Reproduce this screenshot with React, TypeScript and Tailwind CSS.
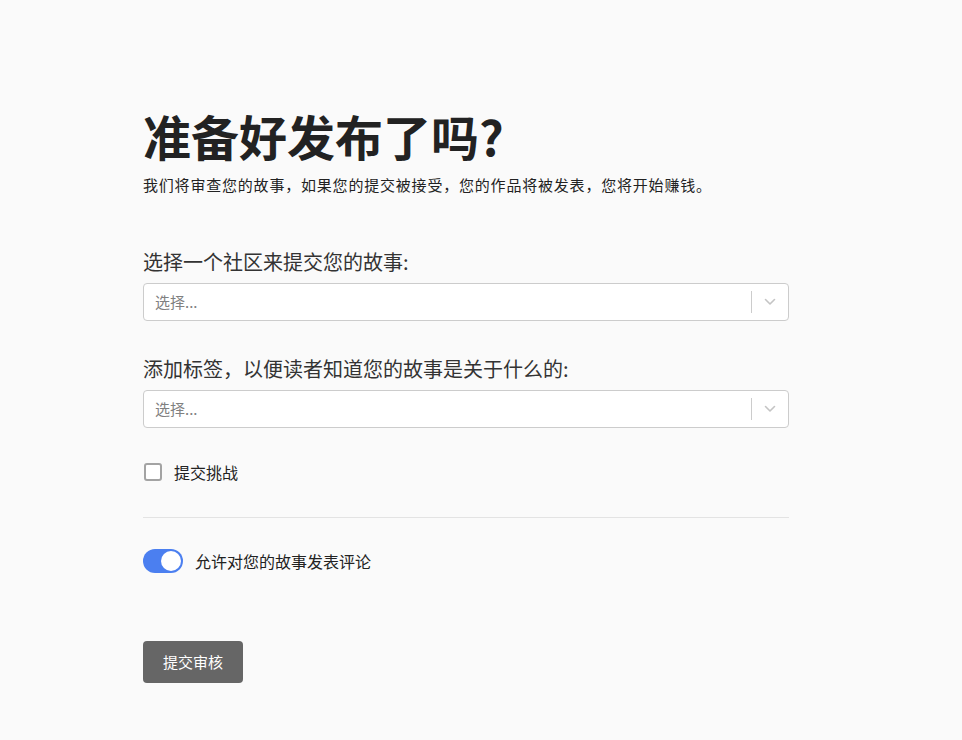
import { useState } from "react";

const FONT = { fontFamily: '"Noto Sans CJK SC", "Noto Sans", sans-serif' };

function Chevron() {
  return (
    <svg width="12" height="8" viewBox="0 0 12 8" fill="none">
      <path d="M1.5 1.5 L6 6 L10.5 1.5" stroke="#c4c4c4" strokeWidth="1.6" strokeLinecap="round" strokeLinejoin="round" />
    </svg>
  );
}

function SelectBox() {
  return (
    <div className="flex h-[38px] w-full items-center rounded-[4px] border border-[#cccccc] bg-white">
      <span className="flex-1 pl-[11px] text-[15px] text-[#808080]">选择...</span>
      <span className="h-[22px] w-px bg-[#cccccc]" />
      <span className="flex w-[36px] items-center justify-center">
        <Chevron />
      </span>
    </div>
  );
}

export default function App() {
  const [challenge, setChallenge] = useState(false);
  const [comments, setComments] = useState(true);

  return (
    <div className="min-h-[740px] bg-[#fafafa] text-[#222222]" style={FONT}>
      <div className="ml-[143px] w-[646px] pt-[106px]">
        <h1 className="text-[48px] font-bold leading-[58px] text-[#222222]">准备好发布了吗?</h1>
        <p className="mt-[11px] text-[15px] leading-[20px] tracking-[0.8px] text-[#222222]">
          我们将审查您的故事，如果您的提交被接受，您的作品将被发表，您将开始赚钱。
        </p>

        <label className="mt-[54px] block text-[20px] leading-[26px] text-[#333333]">选择一个社区来提交您的故事:</label>
        <div className="mt-[8px]">
          <SelectBox />
        </div>

        <label className="mt-[35px] block text-[20px] leading-[26px] text-[#333333]">
          添加标签，以便读者知道您的故事是关于什么的:
        </label>
        <div className="mt-[8px]">
          <SelectBox />
        </div>

        {/* challenge checkbox */}
        <div className="mt-[32px] flex items-center">
          <button
            onClick={() => setChallenge(!challenge)}
            className={`ml-px h-[18px] w-[18px] rounded-[3px] border-2 ${challenge ? "border-[#4b7ff0] bg-[#4b7ff0]" : "border-[#a3a3a3] bg-white"}`}
          />
          <span className="ml-[12px] text-[16px] text-[#222222]">提交挑战</span>
        </div>

        <div className="mt-[33px] h-px w-full bg-[#e3e3e3]" />

        {/* comments toggle */}
        <div className="mt-[31px] flex items-center">
          <button
            onClick={() => setComments(!comments)}
            className={`flex h-[24px] w-[40px] items-center rounded-full p-[2px] ${comments ? "justify-end bg-[#4b7ff0]" : "justify-start bg-[#cccccc]"}`}
          >
            <span className="h-[20px] w-[20px] rounded-full bg-white" />
          </button>
          <span className="ml-[12px] text-[16px] text-[#222222]">允许对您的故事发表评论</span>
        </div>

        <button className="mt-[68px] h-[42px] w-[100px] rounded-[4px] bg-[#666666] text-[15px] text-white">
          提交审核
        </button>
      </div>
    </div>
  );
}
